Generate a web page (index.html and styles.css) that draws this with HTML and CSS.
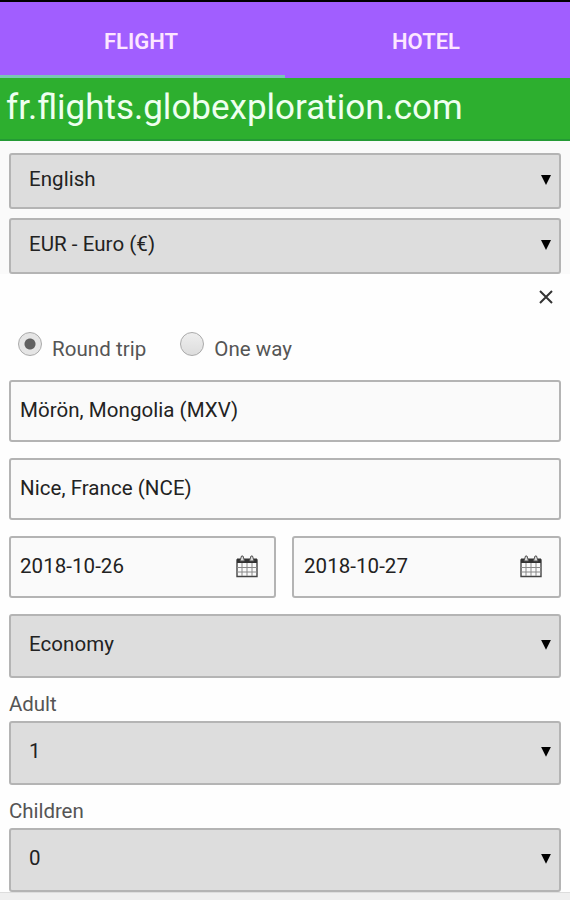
FILE: index.html
```html
<!DOCTYPE html>
<html lang="en">
<head>
    <meta charset="UTF-8">
    <meta name="viewport" content="width=device-width, initial-scale=1.0">
    <title>Flight Search</title>
    <link rel="stylesheet" href="styles.css">
</head>
<body>
    <nav class="tabs">
        <a class="tab active">FLIGHT</a>
        <a class="tab">HOTEL</a>
    </nav>
    <header class="site-header">fr.flights.globexploration.com</header>
    <section class="preferences">
        <div class="select"><span>English</span><i class="arrow"></i></div>
        <div class="select"><span>EUR - Euro (€)</span><i class="arrow"></i></div>
    </section>
    <main class="search-form">
        <div class="close-row">
            <svg class="close" viewBox="0 0 14 14"><path d="M1 1L13 13M13 1L1 13"/></svg>
        </div>
        <div class="trip-type">
            <div class="option"><i class="radio checked"></i><span>Round trip</span></div>
            <div class="option"><i class="radio"></i><span>One way</span></div>
        </div>
        <div class="field"><span>Mörön, Mongolia (MXV)</span></div>
        <div class="field"><span>Nice, France (NCE)</span></div>
        <div class="dates">
            <div class="field">
                <span>2018-10-26</span>
                <svg class="calendar" viewBox="0 0 22 24">
                    <path class="page" d="M1 6h20v16.500H1z"/>
                    <path class="grid" d="M6 9v13M11 9v13M16 9v13M1 13.500h20M1 18h20"/>
                    <path class="bar" d="M1 4.500h20v4.500H1z"/>
                    <path class="ring" d="M4 7L5.500 2h1.500L8.500 7zM13.500 7L15 2h1.500L18 7z"/>
                </svg>
            </div>
            <div class="field">
                <span>2018-10-27</span>
                <svg class="calendar" viewBox="0 0 22 24">
                    <path class="page" d="M1 6h20v16.500H1z"/>
                    <path class="grid" d="M6 9v13M11 9v13M16 9v13M1 13.500h20M1 18h20"/>
                    <path class="bar" d="M1 4.500h20v4.500H1z"/>
                    <path class="ring" d="M4 7L5.500 2h1.500L8.500 7zM13.500 7L15 2h1.500L18 7z"/>
                </svg>
            </div>
        </div>
        <div class="select tall"><span>Economy</span><i class="arrow"></i></div>
        <div class="label">Adult</div>
        <div class="select tall"><span>1</span><i class="arrow"></i></div>
        <div class="label">Children</div>
        <div class="select tall"><span>0</span><i class="arrow"></i></div>
    </main>
    <footer class="bottom-bar"></footer>
</body>
</html>
```
FILE: styles.css
```css
* {
    margin: 0;
    padding: 0;
    box-sizing: border-box;
}
body {
    height: 900px;
    overflow: hidden;
    background: #fefefe;
    border-top: 2px solid #000;
    color: #222;
    font-family: Roboto, sans-serif;
    font-size: 20.5px;
    line-height: 24px;
    letter-spacing: 0.05px;
}

/* tabs */
.tabs { display: flex; height: 76px; background: #a15eff; }
.tab { flex: 1; display: flex; justify-content: center; align-items: center; padding: 7px 3px 0 0; border-bottom: 3px solid transparent; color: #fde6ff; font-size: 22px; font-weight: 600; letter-spacing: 0; }
.tab.active { border-bottom-color: #79c6b4; }

.site-header { height: 63px; padding: 9px 6px 0; background: #2daf2f; border-bottom: 2px solid #249a35; color: #effff0; font-size: 35px; line-height: 42px; letter-spacing: normal; white-space: nowrap; }

.preferences { display: flex; flex-direction: column; gap: 9px; padding: 12px 9px 0; height: 133px; background: #fafafa; }

/* form controls */
.select, .field { display: flex; align-items: center; justify-content: space-between; border: 2px solid #b4b4b4; border-radius: 3px; white-space: nowrap; }
.select { height: 56px; padding: 0 8px 4px 18px; background: #ddd; }
.select.tall { height: 63.5px; }
.arrow { width: 10px; height: 10px; margin-top: 2px; background: #000; clip-path: polygon(0 0, 100% 0, 50% 100%); }
.field { height: 62px; padding: 0 10px 2px 9px; background: #fafafa; }

.search-form { padding: 0 9px; }
.close-row { display: flex; justify-content: flex-end; align-items: center; height: 46px; padding-right: 8px; }
.close { width: 14px; height: 14px; fill: none; stroke: #333; stroke-width: 2; }
.trip-type { display: flex; gap: 34px; height: 60px; padding: 12px 9px 0; color: #555; }
.option { display: flex; gap: 10px; }
.option span { padding-top: 5px; }
.radio { width: 24px; height: 24px; border: 1.5px solid #aaa; border-radius: 50%; background: linear-gradient(#eee, #ddd); }
.radio.checked { background: radial-gradient(circle, #606060 5px, #e5e5e5 6px); }
.field + .field, .field + .dates { margin-top: 16px; }
.dates { display: grid; grid-template-columns: 267px 269px; gap: 16px; margin-bottom: 16px; }
.dates .field { margin-top: 0; padding-right: 17px; }
.dates .field:first-child { padding-right: 16px; }
.dates .field + .field { padding-left: 10px; }
.calendar { width: 22px; height: 24px; }
.page { fill: #fafafa; stroke: #444; stroke-width: 1.4; }
.grid { fill: none; stroke: #888; stroke-width: 1; }
.bar { fill: #333; }
.ring { fill: #ddd; stroke: #555; stroke-width: 1; }
.label { height: 43.5px; padding-top: 14px; color: #555; letter-spacing: -0.05px; }

.bottom-bar { height: 8px; background: #efefef; border-top: 1px solid #ddd; }
```
